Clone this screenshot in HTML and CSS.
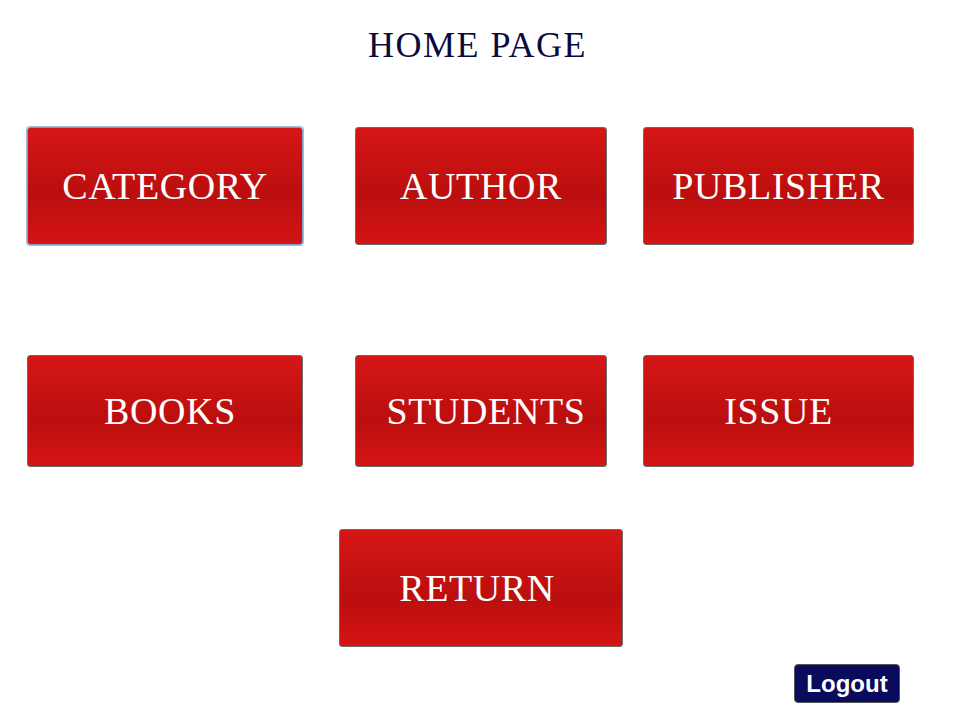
FILE: index.html
```html
<!DOCTYPE html>
<html>
<head>
  <meta charset="utf-8">
  <title>Home Page</title>
  <link rel="stylesheet" href="styles.css">
</head>
<body>
  <div class="page">
    <h1>Home Page</h1>

    <div class="menu row-top">
      <button class="tile wide focused">Category</button>
      <button class="tile mid">Author</button>
      <button class="tile last">Publisher</button>
    </div>

    <div class="menu row-middle">
      <button class="tile wide short nudge">Books</button>
      <button class="tile mid short nudge">Students</button>
      <button class="tile last short">Issue</button>
    </div>

    <div class="single">
      <button class="tile return">Return</button>
    </div>

    <div class="footer">
      <button class="logout">Logout</button>
    </div>
  </div>
</body>
</html>
```

FILE: styles.css
```css
body {
  margin: 0;
  font-family: "Liberation Serif", "DejaVu Serif", serif;
  background: #fff;
}

.page {
  width: 965px;
}

h1 {
  margin: 0;
  padding-top: 25px;
  padding-right: 10px;
  font-size: 36px;
  line-height: 40px;
  font-weight: normal;
  letter-spacing: 1.5px;
  text-transform: uppercase;
  text-align: center;
  color: #0a0a3c;
}

.menu {
  display: grid;
  grid-template-columns: 328px 288px 270px;
  padding-left: 27px;
}

.row-top {
  margin-top: 62px;
}

.row-middle {
  margin-top: 110px;
}

.tile {
  height: 118px;
  border: 1px solid #6b6b6b;
  border-radius: 3px;
  background: linear-gradient(#d71616, #bb0e0e 58%, #d51414);
  color: #fff;
  font-family: "Liberation Serif", "DejaVu Serif", serif;
  font-size: 38px;
  letter-spacing: 0.6px;
  text-transform: uppercase;
  text-align: center;
  padding: 0;
}

.tile.short {
  height: 112px;
}

.tile.nudge {
  padding-left: 10px;
}

.tile.wide {
  width: 276px;
}

.tile.mid {
  width: 252px;
}

.tile.last {
  width: 271px;
}

.tile.focused {
  border-color: #7e9dc6;
  box-shadow: 0 0 0 1px #a3bddd;
}

.single {
  margin-top: 62px;
  padding-left: 339px;
}

.tile.return {
  width: 284px;
  padding-right: 8px;
}

.footer {
  display: flex;
  justify-content: flex-end;
  padding-right: 65px;
  margin-top: 17px;
}

.logout {
  width: 106px;
  height: 39px;
  padding: 0;
  border: 1px solid #555;
  border-radius: 4px;
  background: #0b0b5e;
  color: #fff;
  font-family: "Liberation Sans", Arial, sans-serif;
  font-weight: bold;
  font-size: 24px;
}
```
